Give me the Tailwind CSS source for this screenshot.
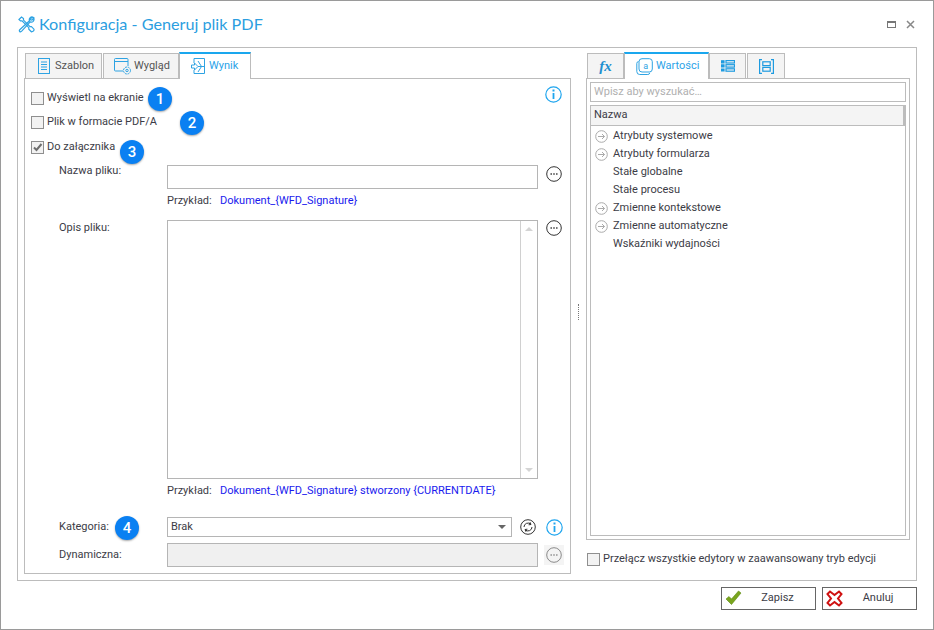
<!DOCTYPE html>
<html><head><meta charset="utf-8"><script src="https://cdn.jsdelivr.net/npm/@tailwindcss/browser@4"></script></head>
<body class="bg-white">
<div class="relative w-[934px] h-[630px] border border-[#9a9a9a] bg-white text-[#3c3c46] text-[11px] font-['Roboto','Noto_Sans',sans-serif] overflow-hidden">
  <!-- title -->
  <div class="h-[46px] pl-[17px] pr-[18px] flex items-center">
    <svg class="w-[17px] h-[17px]" viewBox="0 0 17 17" fill="none" stroke="#2ea3e3" stroke-width="1.2"><path d="M1 3.500 3.500 1l2 1.500v1.600l6.500 6.600 1.400-.1 2.600 2.600c.3 1-.6 2.600-2.600 2.600l-2.600-2.500v-1.600L4 4.900H2.500z"/><path d="M15.500 1.500c-1-.7-2.600-.5-3.500.5-.8.9-.9 1.900-.5 2.800L2 13.500c-.8.8-.8 1.500-.3 2s1.200.5 2-.3l8.500-9.300c1 .4 2.200.2 3-.6.8-.9 1-2 .7-3l-2 1.800-1.500-.4-.3-1.200z"/></svg>
    <span class="ml-[4px] text-[16.2px] text-[#2b9ee0] font-['Lato','Noto_Sans',sans-serif]">Konfiguracja - Generuj plik PDF</span>
    <div class="ml-auto flex items-center gap-[10px]">
      <div class="w-[9px] h-[7px] border border-[#777] border-t-2"></div>
      <svg class="w-[9px] h-[9px]" viewBox="0 0 9 9" stroke="#888" stroke-width="1.500"><path d="M1 1l7 7M8 1l-7 7"/></svg>
    </div>
  </div>
  <!-- main panel -->
  <div class="ml-[16px] w-[900px] h-[534px] border border-[#bcbcbc] flex pt-[4px] pl-[6px]">
    <!-- left -->
    <div class="w-[547px] flex flex-col">
      <div class="h-[26px] flex pl-[1px] items-end">
        <div class="w-[77px] h-[25px] border border-b-0 border-[#bcbcbc] bg-[#f4f4f4] flex items-center pl-[12px] gap-[5px]">
          <svg class="w-[12px] h-[16px]" viewBox="0 0 12 16" fill="none" stroke="#2ea3e3"><rect x=".5" y=".5" width="11" height="15"/><path d="M3 4h6M3 6.500h6M3 9h6M3 11.500h6"/></svg>
          <span class="text-[#555]">Szablon</span>
        </div>
        <div class="w-[76px] h-[25px] ml-[1px] border border-b-0 border-[#bcbcbc] bg-[#f4f4f4] flex items-center pl-[10px] gap-[2px]">
          <svg class="w-[18px] h-[17px]" viewBox="0 0 18 17" fill="none" stroke="#2ea3e3"><path d="M9 13H1.500a1 1 0 0 1-1-1V1.500a1 1 0 0 1 1-1H13a1 1 0 0 1 1 1V8M.5 3.500H14"/><circle cx="13" cy="12.500" r="3.500" stroke-dasharray="2 .8"/><circle cx="13" cy="12.500" r="1.200"/></svg>
          <span class="text-[#555]">Wygląd</span>
        </div>
        <div class="relative w-[72px] h-[27px] mb-[-1px] border-x border-[#bcbcbc] border-t-2 border-t-[#1aa7ee] bg-white z-10 flex items-center pl-[11px] gap-[4px]">
          <svg class="w-[14px] h-[17px]" viewBox="0 0 14 17" fill="none" stroke="#2ea3e3"><path d="M3 5V.5h10.500v15H3V12"/><path d="M.5 7h3V5l3.500 3.500L3.500 12v-2h-3zM7 8.500h6.500M7 3l3.500 5.500L7 14"/></svg>
          <span class="text-[#2ba3e8]">Wynik</span>
        </div>
      </div>
      <div class="relative h-[496px] border border-[#bcbcbc] pl-[6px] pt-[7px]">
        <div class="h-[24px] flex items-center gap-[3px]"><div class="w-[13px] h-[13px] border border-[#8f8f8f] bg-[#f2f2f2]"></div><span>Wyświetl na ekranie</span></div>
        <div class="h-[24px] flex items-center gap-[3px]"><div class="w-[13px] h-[13px] border border-[#8f8f8f] bg-[#f2f2f2]"></div><span>Plik w formacie PDF/A</span></div>
        <div class="h-[25px] mt-[1px] flex items-center gap-[3px]"><div class="w-[13px] h-[13px] border border-[#8f8f8f] bg-[#f2f2f2] flex items-center justify-center"><svg class="w-[11px] h-[11px]" viewBox="0 0 11 11" fill="none" stroke="#6e6e6e" stroke-width="2"><path d="M2 5.500l2.500 2.500L9.500 2"/></svg></div><span>Do załącznika</span></div>
        <div class="flex mt-[5px] h-[24px]"><span class="w-[136px] pl-[28px] mt-[-2px]">Nazwa pliku:</span><div class="w-[371px] h-[24px] border border-[#b5b5b5]"></div>
          <svg class="ml-[8px] mt-[1px] w-[16px] h-[16px]" viewBox="0 0 16 16" fill="none" stroke="#333"><circle cx="8" cy="8" r="7.300"/><path stroke-width="1.500" stroke-dasharray="1.400 1.400" d="M4.500 8h7"/></svg>
        </div>
        <div class="h-[24px] flex items-center pl-[136px]"><span class="w-[53px]">Przykład:</span><span class="text-[#1a1aee]">Dokument_{WFD_Signature}</span></div>
        <div class="flex mt-[7px] h-[259px]"><span class="w-[136px] pl-[28px]">Opis pliku:</span><div class="w-[371px] h-[259px] border border-[#b5b5b5] flex justify-end"><div class="w-[17px] h-full border-l border-[#d0d0d0] flex flex-col justify-between items-center py-[6px]"><div class="w-0 h-0 border-x-[4px] border-x-transparent border-b-[4px] border-b-[#d4d4d4]"></div><div class="w-0 h-0 border-x-[4px] border-x-transparent border-t-[4px] border-t-[#d4d4d4]"></div></div></div>
          <svg class="ml-[8px] w-[16px] h-[16px]" viewBox="0 0 16 16" fill="none" stroke="#333"><circle cx="8" cy="8" r="7.300"/><path stroke-width="1.500" stroke-dasharray="1.400 1.400" d="M4.500 8h7"/></svg>
        </div>
        <div class="h-[24px] flex items-center pl-[136px]"><span class="w-[53px]">Przykład:</span><span class="text-[#1a1aee]">Dokument_{WFD_Signature} stworzony {CURRENTDATE}</span></div>
        <div class="flex mt-[14px] h-[20px] items-center"><span class="w-[136px] pl-[28px]">Kategoria:</span>
          <div class="w-[345px] h-[20px] border border-[#b5b5b5] flex items-center pl-[3px] pr-[5px] justify-between"><span>Brak</span><div class="w-0 h-0 border-x-[4px] border-x-transparent border-t-[4px] border-t-[#666]"></div></div>
          <svg class="ml-[8px] w-[16px] h-[16px]" viewBox="0 0 16 16" fill="none" stroke="#333"><circle cx="8" cy="8" r="7.300"/><path d="M4 8a4 4 0 0 1 6.800-2.800M12 8a4 4 0 0 1-6.800 2.800M10 3.200l1 2.300-2.400.3M6 12.800l-1-2.300 2.400-.3"/></svg>
          <svg class="ml-[10px] w-[17px] h-[17px]" viewBox="0 0 17 17" fill="none" stroke="#1fa5ee" stroke-width="1.200"><circle cx="8.500" cy="8.500" r="7.700"/><path stroke-width="1.800" d="M8.500 7v6"/><path stroke-width="2" d="M8.500 3.500v2"/></svg>
        </div>
        <div class="flex mt-[6px] h-[24px] items-center"><span class="w-[136px] pl-[28px]">Dynamiczna:</span><div class="w-[371px] h-[24px] border border-[#b5b5b5] bg-[#f0f0f0]"></div>
          <div class="ml-[6px] w-[20px] h-[20px] bg-[#f4f4f4] flex items-center justify-center"><svg class="w-[16px] h-[16px]" viewBox="0 0 16 16" fill="none" stroke="#8a8a8a"><circle cx="8" cy="8" r="7.300"/><path stroke-width="1.500" stroke-dasharray="1.400 1.400" d="M4.500 8h7"/></svg></div>
        </div>
        <svg class="absolute left-[520px] top-[7px] w-[17px] h-[17px]" viewBox="0 0 17 17" fill="none" stroke="#1fa5ee" stroke-width="1.200"><circle cx="8.500" cy="8.500" r="7.700"/><path stroke-width="1.800" d="M8.500 7v6"/><path stroke-width="2" d="M8.500 3.500v2"/></svg>
        <div class="absolute left-[123px] top-[8px] w-[24px] h-[24px] rounded-full bg-[#0a80f2] text-white text-[15px] font-medium flex items-center justify-center shadow-[0_1px_2px_rgba(0,0,0,.35)]">1</div>
        <div class="absolute left-[155px] top-[32px] w-[24px] h-[24px] rounded-full bg-[#0a80f2] text-white text-[15px] font-medium flex items-center justify-center shadow-[0_1px_2px_rgba(0,0,0,.35)]">2</div>
        <div class="absolute left-[95px] top-[61px] w-[24px] h-[24px] rounded-full bg-[#0a80f2] text-white text-[15px] font-medium flex items-center justify-center shadow-[0_1px_2px_rgba(0,0,0,.35)]">3</div>
        <div class="absolute left-[90px] top-[437px] w-[24px] h-[24px] rounded-full bg-[#0a80f2] text-white text-[15px] font-medium flex items-center justify-center shadow-[0_1px_2px_rgba(0,0,0,.35)]">4</div>
      </div>
    </div>
    <!-- splitter -->
    <div class="w-[15px] flex items-start justify-center pt-[252px]"><div class="h-[16px] w-0 border-l border-dotted border-[#777]"></div></div>
    <!-- right -->
    <div class="w-[323px] flex flex-col">
      <div class="h-[26px] flex items-end pl-[1px]">
        <div class="w-[37px] h-[25px] border border-b-0 border-[#bcbcbc] bg-[#f4f4f4] flex items-center justify-center font-['Liberation_Serif',serif] italic font-bold text-[15px] text-[#1e8fd0]">fx</div>
        <div class="relative w-[85px] h-[27px] mb-[-1px] border-x border-[#bcbcbc] border-t-2 border-t-[#1aa7ee] bg-white z-10 flex items-center pl-[11px] gap-[3px]">
          <svg class="w-[17px] h-[17px]" viewBox="0 0 17 17" fill="none" stroke="#2ea3e3"><path d="M2.500 3.500A2 2 0 0 0 .8 5.500v8a3 3 0 0 0 3 3h8a2 2 0 0 0 2-1.700"/><rect x="3" y=".7" width="13.300" height="13.300" rx="3"/><text x="9.600" y="10.500" font-size="9" fill="#2ea3e3" stroke="none" text-anchor="middle">a</text></svg>
          <span class="text-[#2ba3e8]">Wartości</span>
        </div>
        <div class="w-[37px] h-[25px] border border-b-0 border-[#bcbcbc] bg-[#f4f4f4] flex items-center justify-center">
          <svg class="w-[14px] h-[12px]" viewBox="0 0 14 12" fill="none" stroke="#1e9be0" stroke-width="1.200"><path d="M.5.800h2.500v2H.5zM.5 4.900h2.500v2H.5zM.5 9h2.500v2H.5z" fill="#1e9be0"/><rect x="5" y=".6" width="8.500" height="2.400"/><rect x="5" y="4.700" width="8.500" height="2.400"/><rect x="5" y="8.800" width="8.500" height="2.400"/></svg>
        </div>
        <div class="w-[38px] h-[25px] ml-[1px] border border-b-0 border-[#bcbcbc] bg-[#f4f4f4] flex items-center justify-center">
          <svg class="w-[15px] h-[15px]" viewBox="0 0 15 15" fill="none" stroke="#1e9be0" stroke-width="1.200"><path d="M3 .6H.6v13.800H3M12 .6h2.400v13.800H12"/><rect x="3.800" y="2.800" width="7.400" height="3.800"/><rect x="3.800" y="8.400" width="7.400" height="3.800"/></svg>
        </div>
      </div>
      <div class="h-[462px] border border-[#bcbcbc] px-[3px] pt-[3px] w-[324px]">
        <div class="h-[20px] w-[316px] border border-[#bcbcbc] flex items-center pl-[3px] text-[#b0b0b0]">Wpisz aby wyszukać…</div>
        <div class="mt-[3px] h-[431px] w-[316px] border border-[#bcbcbc]">
          <div class="h-[20px] bg-[#f4f4f4] border-b border-r-2 border-[#bcbcbc] flex items-center pl-[3px]">Nazwa</div>
          <div class="pt-[1px]">
            <div class="h-[18px] flex items-center"><svg class="ml-[4px] w-[13px] h-[13px]" viewBox="0 0 13 13" fill="none" stroke="#aaa"><circle cx="6.500" cy="6.500" r="5.800"/><path d="M3 6.500h6.500M7 4l2.500 2.500L7 9"/></svg><span class="ml-[5px]">Atrybuty systemowe</span></div>
            <div class="h-[18px] flex items-center"><svg class="ml-[4px] w-[13px] h-[13px]" viewBox="0 0 13 13" fill="none" stroke="#aaa"><circle cx="6.500" cy="6.500" r="5.800"/><path d="M3 6.500h6.500M7 4l2.500 2.500L7 9"/></svg><span class="ml-[5px]">Atrybuty formularza</span></div>
            <div class="h-[18px] flex items-center pl-[22px]">Stałe globalne</div>
            <div class="h-[18px] flex items-center pl-[22px]">Stałe procesu</div>
            <div class="h-[18px] flex items-center"><svg class="ml-[4px] w-[13px] h-[13px]" viewBox="0 0 13 13" fill="none" stroke="#aaa"><circle cx="6.500" cy="6.500" r="5.800"/><path d="M3 6.500h6.500M7 4l2.500 2.500L7 9"/></svg><span class="ml-[5px]">Zmienne kontekstowe</span></div>
            <div class="h-[18px] flex items-center"><svg class="ml-[4px] w-[13px] h-[13px]" viewBox="0 0 13 13" fill="none" stroke="#aaa"><circle cx="6.500" cy="6.500" r="5.800"/><path d="M3 6.500h6.500M7 4l2.500 2.500L7 9"/></svg><span class="ml-[5px]">Zmienne automatyczne</span></div>
            <div class="h-[18px] flex items-center pl-[22px]">Wskaźniki wydajności</div>
          </div>
        </div>
      </div>
      <div class="mt-[11px] flex items-center gap-[3px] pl-[1px]"><div class="w-[13px] h-[13px] border border-[#8f8f8f] bg-[#f2f2f2]"></div><span>Przełącz wszystkie edytory w zaawansowany tryb edycji</span></div>
    </div>
  </div>
  <!-- footer -->
  <div class="mt-[6px] pr-[16px] flex justify-end gap-[6px]">
    <div class="relative w-[95px] h-[23px] border border-[#666] flex items-center justify-center pl-[18px]">
      <svg class="absolute left-[3px] top-[2px] w-[17px] h-[16px]" viewBox="0 0 17 16" fill="#7aa51e" stroke="#5d8a10" stroke-width=".6"><path d="M1 9l3-2.500 2.500 2.500L13.500 1 16 3 6.500 14.500z"/></svg>
      <span>Zapisz</span>
    </div>
    <div class="relative w-[95px] h-[23px] border border-[#666] flex items-center justify-center pl-[17px]">
      <svg class="absolute left-[3px] top-[2px] w-[17px] h-[17px]" viewBox="0 0 17 17" fill="#fff" stroke="#cf1111" stroke-width="2"><path d="M1.500 4 4 1.500 8.500 5 13 1.500 15.500 4 12 8.500 15.500 13 13 15.500 8.500 12 4 15.500 1.500 13 5 8.500z"/></svg>
      <span>Anuluj</span>
    </div>
  </div>
</div>
</body></html>
